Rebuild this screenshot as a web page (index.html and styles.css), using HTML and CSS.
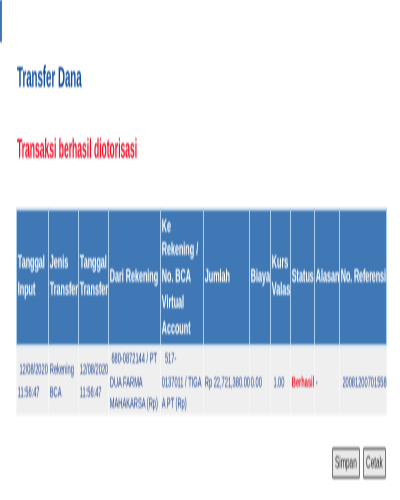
FILE: index.html
```html
<!DOCTYPE html>
<html>
    <head>
    <title>Transfer Dana</title>
    <link rel="stylesheet" href="styles.css">
    </head>
    <body>
        <div class="page">
            <div class="topbar"></div>
            <h1 class="title">Transfer Dana</h1>
            <h2 class="notice">Transaksi berhasil diotorisasi</h2>

            <table class="result">
                <colgroup>
                    <col class="c1"><col class="c2"><col class="c3"><col class="c4"><col class="c5"><col class="c6">
                    <col class="c7"><col class="c8"><col class="c9"><col class="c10"><col class="c11">
                </colgroup>
                <tr>
                    <th>Tanggal Input</th>
                    <th>Jenis Transfer</th>
                    <th>Tanggal Transfer</th>
                    <th>Dari Rekening</th>
                    <th>Ke Rekening / No. BCA Virtual Account</th>
                    <th>Jumlah</th>
                    <th>Biaya</th>
                    <th>Kurs Valas</th>
                    <th>Status</th>
                    <th>Alasan</th>
                    <th class="ref">No. Referensi</th>
                </tr>
                <tr>
                    <td>&nbsp;12/08/2020<br>11:56:47</td>
                    <td>Rekening BCA</td>
                    <td>12/08/2020<br>11:56:47</td>
                    <td>&nbsp;680-0872144 / PT<br>DUA FARMA<br>MAHAKARSA (Rp)</td>
                    <td>&nbsp;&nbsp;517-<br>0137011 / TIGA<br>A PT (Rp)</td>
                    <td>Rp 22,721,380.00</td>
                    <td>0.00</td>
                    <td>&nbsp;1.00</td>
                    <td class="ok">Berhasil</td>
                    <td>-</td>
                    <td>&nbsp;20081200701558</td>
                </tr>
            </table>

            <div class="buttons">
                <button class="btn">Simpan</button>
                <button class="btn">Cetak</button>
            </div>
        </div>
    </body>
</html>
```
FILE: styles.css
```css
html, body {
    margin: 0;
    padding: 0;
    height: 500px;
    background-color: #ffffff;
}

/* the whole page is stretched upwards, so it is laid out short */
.page {
    position: relative;
    z-index: 1;
    width: 400px;
    height: 190px;
    font-family: "Liberation Sans", Arial, sans-serif;
    transform: scaleY(2.6316);
    transform-origin: left top;
    will-change: transform;
    filter: blur(0.35px);
}

.topbar {
    width: 2px;
    height: 16.3px;
    background-color: #3f78b5;
}

.title {
    margin: 8px 0 0 16.7px;
    font-size: 11.4px;
    line-height: 11.4px;
    font-weight: bold;
    color: #0f4c9e;
    transform: scaleX(0.85);
    transform-origin: left top;
}

.notice {
    margin: 16.2px 0 0 16.7px;
    font-size: 10.3px;
    line-height: 10.6px;
    font-weight: bold;
    color: #f01028;
    transform: scaleX(0.83);
    transform-origin: left top;
}

table.result {
    table-layout: fixed;
    width: 370px;
    margin: 16.1px 0 0 16px;
    border-collapse: collapse;
}

.c1 { width: 32px; }
.c2 { width: 30px; }
.c3 { width: 30px; }
.c4 { width: 52px; }
.c5 { width: 43px; }
.c6 { width: 46px; }
.c7 { width: 21px; }
.c8 { width: 20px; }
.c9 { width: 24px; }
.c10 { width: 25px; }
.c11 { width: 47px; }

.result th {
    padding: 0.4px 0.8px;
    height: 50.6px;
    background-color: #3f78b5;
    border: 1px solid #a9cdeb;
    border-top-color: #cfe2f2;
    border-bottom-color: #dcecf8;
    color: #ffffff;
    font-size: 7.2px;
    line-height: 9.9px;
    font-weight: bold;
    text-align: left;
}

.result th.ref {
    white-space: nowrap;
    letter-spacing: -0.1px;
}

.result td {
    padding: 0.4px 0.8px;
    height: 24.4px;
    background-color: #efefef;
    border: 1px solid #f6f6f6;
    color: #1c3f8c;
    font-size: 5.7px;
    line-height: 8.2px;
    white-space: nowrap;
}

.result td:nth-child(2) {
    white-space: normal;
}

.result td.ok {
    color: #f01028;
    font-weight: bold;
}

.buttons {
    display: flex;
    justify-content: flex-end;
    gap: 3px;
    width: 386px;
    margin-top: 11.8px;
}

.btn {
    height: 11.4px;
    padding: 0 2.2px;
    background-color: #e9e9e9;
    border: 1px solid #777777;
    border-radius: 1px;
    color: #222222;
    font-family: "Liberation Sans", Arial, sans-serif;
    font-size: 6.4px;
}
```
